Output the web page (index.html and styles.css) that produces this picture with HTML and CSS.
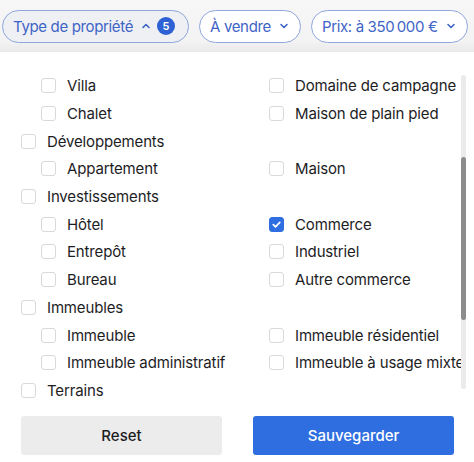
FILE: index.html
```html
<!DOCTYPE html>
<html lang="fr">
<head>
<meta charset="utf-8">
<link rel="stylesheet" href="styles.css">
</head>
<body>
<div class="page">
  <div class="topbar">
    <div class="pill pill-active">
      <span>Type de propriété</span>
      <svg class="chev" width="10" height="10" viewBox="0 0 10 10"><path d="M2 6.5 L5 3.5 L8 6.5" fill="none" stroke="currentColor" stroke-width="1.6" stroke-linecap="round" stroke-linejoin="round"/></svg>
      <span class="badge">5</span>
    </div>
    <div class="pill">
      <span>À vendre</span>
      <svg class="chev" width="10" height="10" viewBox="0 0 10 10"><path d="M2 3.5 L5 6.5 L8 3.5" fill="none" stroke="currentColor" stroke-width="1.6" stroke-linecap="round" stroke-linejoin="round"/></svg>
    </div>
    <div class="pill">
      <span>Prix: à 350&#8239;000 €</span>
      <svg class="chev" width="10" height="10" viewBox="0 0 10 10"><path d="M2 3.5 L5 6.5 L8 3.5" fill="none" stroke="currentColor" stroke-width="1.6" stroke-linecap="round" stroke-linejoin="round"/></svg>
    </div>
  </div>

  <div class="listwrap">
    <div class="list">
      <div class="grid">
        <label class="item"><span class="box"></span>Villa</label>
        <label class="item"><span class="box"></span>Domaine de campagne</label>
        <label class="item"><span class="box"></span>Chalet</label>
        <label class="item"><span class="box"></span>Maison de plain pied</label>
      </div>
      <label class="item top"><span class="box"></span>Développements</label>
      <div class="grid">
        <label class="item"><span class="box"></span>Appartement</label>
        <label class="item"><span class="box"></span>Maison</label>
      </div>
      <label class="item top"><span class="box"></span>Investissements</label>
      <div class="grid">
        <label class="item"><span class="box"></span>Hôtel</label>
        <label class="item"><span class="box checked"><svg width="11" height="11" viewBox="0 0 11 11"><path d="M2.3 5.7 L4.5 7.9 L8.8 3.3" fill="none" stroke="#fff" stroke-width="1.7" stroke-linecap="round" stroke-linejoin="round"/></svg></span>Commerce</label>
        <label class="item"><span class="box"></span>Entrepôt</label>
        <label class="item"><span class="box"></span>Industriel</label>
        <label class="item"><span class="box"></span>Bureau</label>
        <label class="item"><span class="box"></span>Autre commerce</label>
      </div>
      <label class="item top"><span class="box"></span>Immeubles</label>
      <div class="grid">
        <label class="item"><span class="box"></span>Immeuble</label>
        <label class="item"><span class="box"></span>Immeuble résidentiel</label>
        <label class="item"><span class="box"></span>Immeuble administratif</label>
        <label class="item"><span class="box"></span>Immeuble à usage mixte</label>
      </div>
      <label class="item top"><span class="box"></span>Terrains</label>
    </div>
    <div class="scrolltrack"><div class="scrollthumb"></div></div>
  </div>

  <div class="actions">
    <button class="btn btn-reset">Reset</button>
    <button class="btn btn-save">Sauvegarder</button>
  </div>
</div>
</body>
</html>
```

FILE: styles.css
```css
* { box-sizing: border-box; }
html, body { margin: 0; padding: 0; background: #fff; }
body {
  font-family: Inter, "Noto Sans", "Liberation Sans", sans-serif;
  color: #1d1d1f;
  width: 474px;
  height: 462px;
  overflow: hidden;
}
.page { display: flex; flex-direction: column; height: 462px; }

.topbar {
  height: 52px;
  display: flex;
  align-items: center;
  gap: 10px;
  padding-left: 2px;
  background: linear-gradient(#f7f7f7 0%, #f3f3f3 80%, #e9e9e9 100%);
  flex: none;
}
.pill {
  height: 33px;
  border: 1px solid #8ea6dd;
  border-radius: 17px;
  background: #fff;
  color: #3e64c6;
  font-size: 15px;
  letter-spacing: -0.35px;
  display: flex;
  align-items: center;
  padding: 0 11px 0 10px;
  white-space: nowrap;
}
.pill-active {
  background: #eef0f4;
  padding-right: 13px;
}
.chev { margin-left: 8px; flex: none; }
.pill-active .chev { margin-left: 8px; margin-right: 6px; }
.badge {
  width: 18px;
  height: 18px;
  border-radius: 50%;
  background: #2e62d4;
  color: #fff;
  font-size: 11px;
  font-weight: 600;
  letter-spacing: 0;
  display: flex;
  align-items: center;
  justify-content: center;
}

.listwrap {
  position: relative;
  flex: none;
  height: 352px;
  overflow: hidden;
}
.list {
  padding: 20px 0 0 21px;
}
.item {
  display: flex;
  align-items: center;
  height: 27.7px;
  font-size: 15px;
  letter-spacing: -0.15px;
  color: #1d1d1f;
  white-space: nowrap;
}
.box {
  width: 15px;
  height: 15px;
  border: 1px solid #d9d9d9;
  border-radius: 3px;
  background: #fff;
  margin-right: 11px;
  flex: none;
  display: flex;
  align-items: center;
  justify-content: center;
}
.box.checked {
  background: #2f6ee0;
  border-color: #2f6ee0;
}
.grid {
  display: grid;
  grid-template-columns: 228px 1fr;
  padding-left: 20px;
}
.scrolltrack {
  position: absolute;
  left: 461px;
  top: 23px;
  width: 5px;
  height: 314px;
  border-radius: 3px;
  background: #ebebeb;
}
.scrollthumb {
  position: absolute;
  left: 0;
  top: 82px;
  width: 5px;
  height: 163px;
  border-radius: 3px;
  background: #8c8c8c;
}

.actions {
  display: flex;
  gap: 31px;
  padding: 12px 20px 0 21px;
}
.btn {
  width: 201px;
  height: 39px;
  border: none;
  border-radius: 3px;
  font-family: Inter, "Noto Sans", "Liberation Sans", sans-serif;
  font-size: 15px;
  font-weight: 500;
}
.btn-reset { background: #ececec; color: #1d1d1f; }
.btn-save { background: #2f6ee0; color: #fff; }
```
